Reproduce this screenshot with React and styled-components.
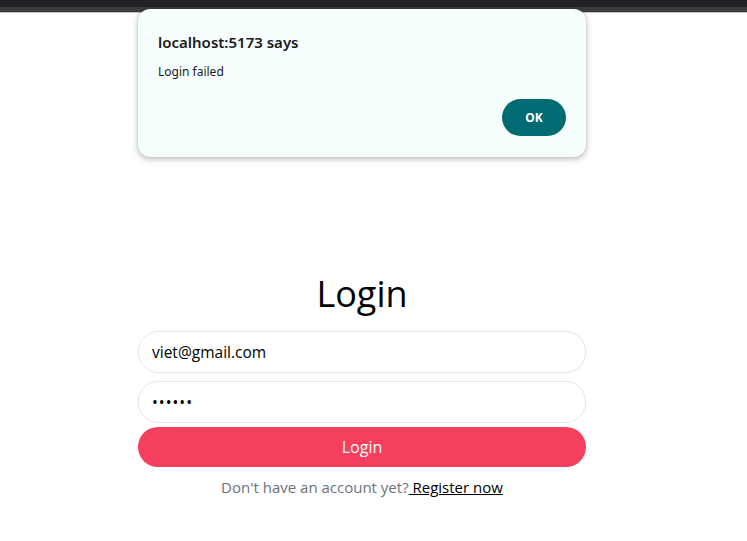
import React from "react";
import styled, { createGlobalStyle } from "styled-components";

const Global = createGlobalStyle`
  html, body { margin: 0; padding: 0; background: #ffffff; }
  body { font-family: "Open Sans", "Noto Sans", Arial, sans-serif; }
  * { box-sizing: border-box; }
`;

const Page = styled.div`
  position: relative;
  width: 747px;
  height: 541px;
  overflow: hidden;
  background: #fff;
`;

const BrowserBar = styled.div`
  height: 7px;
  background: #202124;
`;

const BrowserStrip = styled.div`
  height: 6px;
  background: #3c3c3c;
  border-bottom: 1px solid #bdbdbd;
`;

const Main = styled.main`
  display: flex;
  flex-direction: column;
  align-items: center;
  padding: 259px 23px 0 0;
`;

const Form = styled.form`
  width: 448px;
  display: flex;
  flex-direction: column;
  align-items: stretch;
`;

const Heading = styled.h1`
  margin: 0 0 15px;
  font-weight: 400;
  font-size: 36px;
  line-height: 44px;
  text-align: center;
  color: #000;
`;

const Input = styled.input`
  height: 42px;
  border: 1px solid #e5e5e5;
  border-radius: 20px;
  padding: 0 13px;
  font: inherit;
  font-size: 15.5px;
  color: #000;
  background: #fff;
  margin-bottom: ${(p) => p.$mb}px;
  outline: none;
  letter-spacing: ${(p) => (p.type === "password" ? "1px" : "0")};
`;

const SubmitButton = styled.button`
  height: 40px;
  border: none;
  border-radius: 20px;
  background: #f43f5e;
  color: #fff;
  font: inherit;
  font-size: 16px;
  cursor: pointer;
`;

const Footer = styled.p`
  margin: 10px 0 0;
  text-align: center;
  font-size: 15px;
  color: #6b7280;
`;

const RegisterLink = styled.a`
  color: #000;
  text-decoration: underline;
`;

const Dialog = styled.div`
  position: absolute;
  left: 138px;
  top: 9px;
  width: 448px;
  height: 148px;
  background: #f6fefe;
  border-radius: 12px;
  box-shadow: 0 2px 6px rgba(0, 0, 0, 0.28), 0 0 1px rgba(0, 0, 0, 0.25);
  padding: 23px 20px 20px 20px;
  display: flex;
  flex-direction: column;
  font-family: "Noto Sans", "Open Sans", Arial, sans-serif;
`;

const DialogTitle = styled.div`
  font-size: 15px;
  font-weight: 600;
  color: #1b1b1b;
  line-height: 20px;
`;

const DialogMessage = styled.div`
  margin-top: 12px;
  font-size: 12px;
  color: #1b1b1b;
  line-height: 16px;
`;

const DialogActions = styled.div`
  margin-top: auto;
  display: flex;
  justify-content: flex-end;
`;

const OkButton = styled.button`
  width: 64px;
  height: 37px;
  border: none;
  border-radius: 19px;
  background: #006b73;
  color: #fff;
  font-family: inherit;
  font-weight: 700;
  font-size: 12px;
  margin-bottom: 1px;
`;

export default function App() {
  return (
    <>
      <Global />
      <Page>
        <BrowserBar />
        <BrowserStrip />
        <Main>
          <Form onSubmit={(e) => e.preventDefault()}>
            <Heading>Login</Heading>
            <Input type="email" defaultValue="viet@gmail.com" $mb={8} />
            <Input type="password" defaultValue="123456" $mb={4} />
            <SubmitButton type="submit">Login</SubmitButton>
            <Footer>
              Don't have an account yet?
              <RegisterLink href="#"> Register now</RegisterLink>
            </Footer>
          </Form>
        </Main>
        <Dialog role="alertdialog">
          <DialogTitle>localhost:5173 says</DialogTitle>
          <DialogMessage>Login failed</DialogMessage>
          <DialogActions>
            <OkButton>OK</OkButton>
          </DialogActions>
        </Dialog>
      </Page>
    </>
  );
}
